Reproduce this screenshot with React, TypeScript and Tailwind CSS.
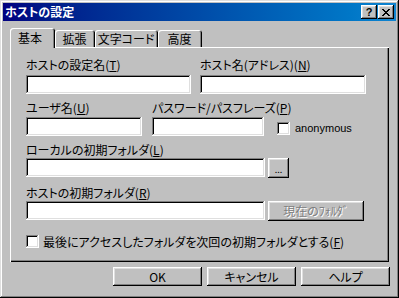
import React from 'react';

const raised =
  'shadow-[inset_-1px_-1px_#000,inset_1px_1px_#fff,inset_-2px_-2px_#808080,inset_2px_2px_#dfdfdf]';
const sunken =
  'shadow-[inset_-1px_-1px_#fff,inset_1px_1px_#808080,inset_-2px_-2px_#dfdfdf,inset_2px_2px_#000]';

function Label({ children }: { children: React.ReactNode }) {
  return <div className="h-[14px] leading-[14px] whitespace-nowrap">{children}</div>;
}

function Field({ w }: { w: string }) {
  return <div className={`h-[19px] bg-white ${sunken} ${w}`} />;
}

function Check() {
  return <div className={`w-[13px] h-[13px] bg-white shrink-0 ${sunken}`} />;
}

function Tab({ label, w, active }: { label: string; w: string; active?: boolean }) {
  return (
    <div
      className={
        active
          ? `relative z-10 ${w} h-[20px] -mb-[1px] bg-[#c0c0c0] rounded-t-[3px] shadow-[inset_1px_1px_#fff,inset_-1px_0_#000,inset_-2px_0_#808080] pl-[8px] pt-[3px] leading-[14px]`
          : `${w} h-[17px] bg-[#c0c0c0] rounded-t-[3px] shadow-[inset_1px_1px_#fff,inset_-1px_0_#000,inset_-2px_0_#808080] text-center pr-[1px] pt-[2px] leading-[14px]`
      }
    >
      {label}
    </div>
  );
}

export default function App() {
  return (
    <div
      className="w-[399px] h-[298px] bg-[#c0c0c0] p-[3px] text-[12px] text-black font-['Noto_Sans_CJK_JP',sans-serif] [font-feature-settings:'palt'] shadow-[inset_-1px_-1px_#000,inset_1px_1px_#dfdfdf,inset_-2px_-2px_#808080,inset_2px_2px_#fff]"
    >
      {/* title bar */}
      <div className="h-[18px] flex items-center justify-between pl-[2px] pr-[2px] bg-gradient-to-r from-[#000080] to-[#1084d0]">
        <span className="text-white font-bold leading-[14px]">ホストの設定</span>
        <div className="flex gap-[1px]">
          <div className={`w-[16px] h-[14px] bg-[#c0c0c0] flex items-center justify-center ${raised}`}>
            <span className="font-['Liberation_Sans',sans-serif] font-bold text-[11px] leading-none">?</span>
          </div>
          <div className={`w-[16px] h-[14px] bg-[#c0c0c0] flex items-center justify-center ${raised}`}>
            <svg width="8" height="7" viewBox="0 0 8 7" shapeRendering="crispEdges">
              <path d="M0 0h2v1h-2zM6 0h2v1h-2zM1 1h2v1h-2zM5 1h2v1h-2zM2 2h4v1h-4zM3 3h2v1h-2zM2 4h4v1h-4zM1 5h2v1h-2zM5 5h2v1h-2zM0 6h2v1h-2zM6 6h2v1h-2z" fill="#000" />
            </svg>
          </div>
        </div>
      </div>

      {/* tabs + panel */}
      <div className="pl-[7px] pt-[7px]">
        <div className="flex items-end">
          <Tab label="基本" w="w-[45px]" active />
          <Tab label="拡張" w="w-[40px]" />
          <Tab label="文字コード" w="w-[63px]" />
          <Tab label="高度" w="w-[44px]" />
        </div>
        <div className="w-[379px] h-[215px] shadow-[inset_1px_1px_#fff,inset_-1px_-1px_#000,inset_-2px_-2px_#808080] pl-[16px] pt-[11px] flex flex-col">
          <div className="flex">
            <div className="w-[165px]">
              <Label>
                ホストの設定名(<u>T</u>)
              </Label>
              <div className="mt-[3px]">
                <Field w="w-[165px]" />
              </div>
            </div>
            <div className="ml-[9px] w-[166px]">
              <Label>
                ホスト名(アドレス)(<u>N</u>)
              </Label>
              <div className="mt-[3px]">
                <Field w="w-[166px]" />
              </div>
            </div>
          </div>

          <div className="flex mt-[7px]">
            <div className="w-[116px]">
              <Label>
                ユーザ名(<u>U</u>)
              </Label>
              <div className="mt-[2px]">
                <Field w="w-[116px]" />
              </div>
            </div>
            <div className="ml-[10px] w-[112px]">
              <Label>
                パスワード/パスフレーズ(<u>P</u>)
              </Label>
              <div className="mt-[2px]">
                <Field w="w-[112px]" />
              </div>
            </div>
            <div className="ml-[13px] mt-[21px] flex items-center h-[13px]">
              <Check />
              <span className="ml-[5px] text-[11px] leading-[13px] font-['Liberation_Sans',sans-serif]">anonymous</span>
            </div>
          </div>

          <div className="mt-[7px]">
            <Label>
              ローカルの初期フォルダ(<u>L</u>)
            </Label>
            <div className="mt-[1px] flex">
              <Field w="w-[239px]" />
              <div className={`ml-[3px] w-[21px] h-[20px] bg-[#c0c0c0] flex items-end justify-center pb-[4px] ${raised}`}>
                <span className="text-[9px] leading-none">...</span>
              </div>
            </div>
          </div>

          <div className="mt-[8px]">
            <Label>
              ホストの初期フォルダ(<u>R</u>)
            </Label>
            <div className="mt-[1px] flex">
              <Field w="w-[239px]" />
              <div className={`ml-[3px] w-[96px] h-[20px] bg-[#c0c0c0] flex items-center justify-center ${raised}`}>
                <span className="text-[#808080] [text-shadow:1px_1px_#fff] leading-[14px]">現在のﾌｫﾙﾀﾞ</span>
              </div>
            </div>
          </div>

          <div className="mt-[14px] flex items-center h-[13px]">
            <Check />
            <span className="ml-[4px] leading-[14px] whitespace-nowrap">
              最後にアクセスしたフォルダを次回の初期フォルダとする(<u>F</u>)
            </span>
          </div>
        </div>

        {/* buttons */}
        <div className="flex justify-end gap-[5px] mt-[5px] w-[380px]">
          {['OK', 'キャンセル', 'ヘルプ'].map((t) => (
            <div key={t} className={`w-[89px] h-[19px] bg-[#c0c0c0] flex items-center justify-center leading-[14px] ${raised}`}>
              {t}
            </div>
          ))}
        </div>
      </div>
    </div>
  );
}
